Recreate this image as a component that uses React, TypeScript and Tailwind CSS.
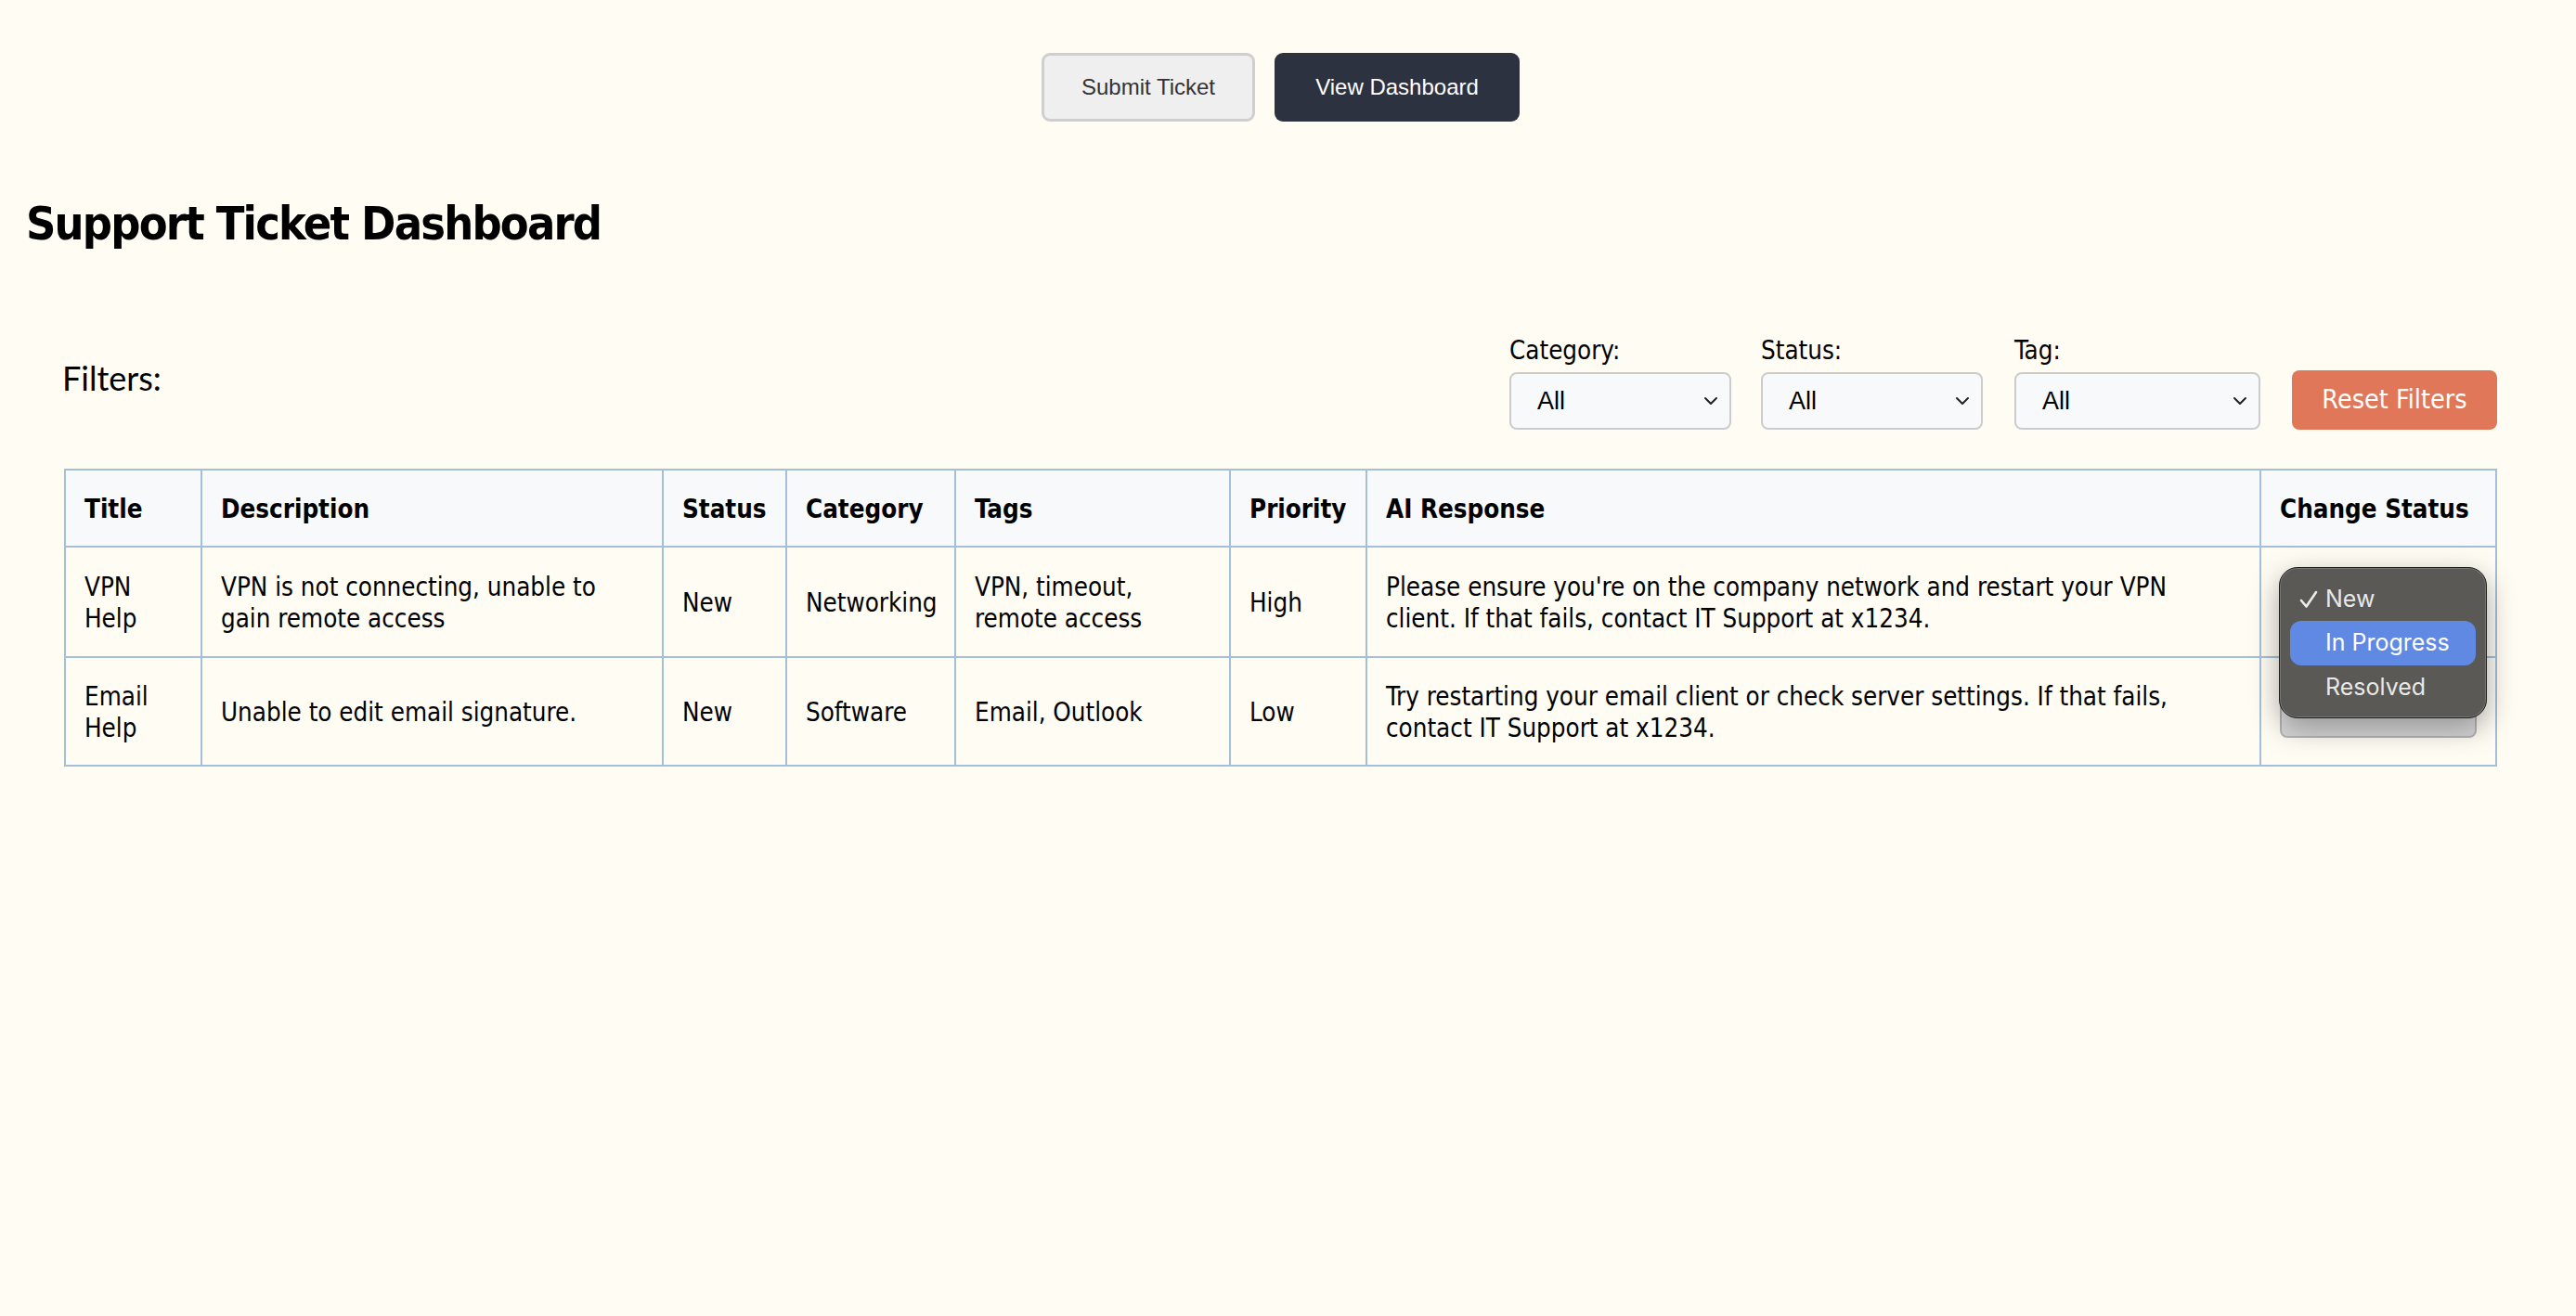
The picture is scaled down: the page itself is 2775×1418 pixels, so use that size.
import React from "react";

const tahoma = { fontFamily: '"DejaVu Sans Condensed", "DejaVu Sans", sans-serif' };

function Chevron() {
  return (
    <svg width="16" height="10" viewBox="0 0 16 10" className="shrink-0">
      <polyline points="2,2 8,8 14,2" fill="none" stroke="#222" strokeWidth="2" strokeLinecap="round" strokeLinejoin="round" />
    </svg>
  );
}

function FilterSelect({ label, width }: { label: string; width: string }) {
  return (
    <div className="flex flex-col gap-[8px]">
      <span className="text-[27.5px] leading-[32px] text-black" style={tahoma}>{label}</span>
      <div className={`${width} h-[62px] flex items-center justify-between pl-[28px] pr-[12px] bg-[#f8f9fa] border-2 border-[#cccccc] rounded-[8px]`}>
        <span className="text-[27px] text-black" style={{ fontFamily: '"Liberation Sans", Arial, sans-serif' }}>All</span>
        <Chevron />
      </div>
    </div>
  );
}

const th = "border-2 border-[#a3c0d8] bg-[#f8f9fa] px-[20px] text-left align-middle font-bold text-[27.5px] leading-[34px] text-black whitespace-nowrap";
const td = "border-2 border-[#a3c0d8] px-[20px] text-left align-middle text-[27.5px] leading-[34px] text-black whitespace-nowrap";

export default function App() {
  return (
    <div className="min-h-[1418px] w-full bg-[#fffcf4] text-black" style={tahoma}>
      <div className="flex justify-center gap-[21px] pt-[57px] pr-[16px]">
        <button className="w-[230px] h-[74px] bg-[#efeff0] border-[3px] border-[#cfcfcf] rounded-[9px] text-[24px] text-[#333]" style={{ fontFamily: '"Liberation Sans", Arial, sans-serif' }}>
          Submit Ticket
        </button>
        <button className="w-[264px] h-[74px] bg-[#2c3240] rounded-[9px] text-[24px] text-white" style={{ fontFamily: '"Liberation Sans", Arial, sans-serif' }}>
          View Dashboard
        </button>
      </div>

      <h1 className="mt-[77px] ml-[28px] text-[50px] leading-[67px] font-bold tracking-[-1.8px]">Support Ticket Dashboard</h1>

      <div className="ml-[67px] mr-[85px] mt-[86px]">
        <div className="flex items-start justify-between">
          <div className="pt-[26px] text-[36px] leading-[40px]" style={{ fontFamily: 'Lato, "Liberation Sans", sans-serif' }}>Filters:</div>
          <div className="flex items-end">
            <FilterSelect label="Category:" width="w-[239px]" />
            <div className="ml-[32px]">
              <FilterSelect label="Status:" width="w-[239px]" />
            </div>
            <div className="ml-[34px]">
              <FilterSelect label="Tag:" width="w-[265px]" />
            </div>
            <button className="ml-[34px] w-[221px] h-[64px] bg-[#df7758] rounded-[8px] text-white text-[28.5px]" style={tahoma}>Reset Filters</button>
          </div>
        </div>

        <div className="relative mt-[42px] ml-[2px]">
          <table className="table-fixed border-collapse w-[2619px] border-2 border-[#a3c0d8]">
            <colgroup>
              <col className="w-[147px]" />
              <col className="w-[497px]" />
              <col className="w-[133px]" />
              <col className="w-[182px]" />
              <col className="w-[296px]" />
              <col className="w-[147px]" />
              <col className="w-[963px]" />
              <col className="w-[254px]" />
            </colgroup>
            <thead>
              <tr className="h-[83px]">
                <th className={th}>Title</th>
                <th className={th}>Description</th>
                <th className={th}>Status</th>
                <th className={th}>Category</th>
                <th className={th}>Tags</th>
                <th className={th}>Priority</th>
                <th className={th}>AI Response</th>
                <th className={th}>Change Status</th>
              </tr>
            </thead>
            <tbody>
              <tr className="h-[119px]">
                <td className={td}>VPN<br />Help</td>
                <td className={td}>VPN is not connecting, unable to<br />gain remote access</td>
                <td className={td}>New</td>
                <td className={td}>Networking</td>
                <td className={td}>VPN, timeout,<br />remote access</td>
                <td className={td}>High</td>
                <td className={td}>Please ensure you're on the company network and restart your VPN<br />client. If that fails, contact IT Support at x1234.</td>
                <td className={td}>
                  <div className="h-[56px] rounded-[8px] border-2 border-[#b5b5b5] bg-gradient-to-b from-[#f2f2f2] to-[#d6d6d6]" />
                </td>
              </tr>
              <tr className="h-[117px]">
                <td className={td}>Email<br />Help</td>
                <td className={td}>Unable to edit email signature.</td>
                <td className={td}>New</td>
                <td className={td}>Software</td>
                <td className={td}>Email, Outlook</td>
                <td className={td}>Low</td>
                <td className={td}>Try restarting your email client or check server settings. If that fails,<br />contact IT Support at x1234.</td>
                <td className={td}>
                  <div className="h-[56px] rounded-[8px] border-2 border-[#b5b5b5] bg-gradient-to-b from-[#f2f2f2] to-[#d6d6d6]" />
                </td>
              </tr>
            </tbody>
          </table>

          <div
            className="absolute right-[11px] top-[106px] w-[224px] h-[163px] rounded-[20px] bg-[#5a5955] border border-[#1e1e1e] shadow-[0_10px_30px_rgba(0,0,0,0.35),inset_0_0_0_1px_rgba(255,255,255,0.18)] px-[11px] pt-[11px]"
            style={{ fontFamily: 'Inter, "Noto Sans", sans-serif' }}
          >
            <div className="relative flex items-center h-[46px] text-[25px] text-[#e8e8e6]">
              <svg width="20" height="20" viewBox="0 0 20 20" className="ml-[10px] mr-[8px]">
                <polyline points="2,11 7.5,17.5 18,2" fill="none" stroke="#ececea" strokeWidth="2.6" strokeLinecap="round" strokeLinejoin="round" />
              </svg>
              <span>New</span>
            </div>
            <div className="relative flex items-center h-[48px] rounded-[12px] bg-[#5f89e3] pl-[38px] text-[25px] text-white">In Progress</div>
            <div className="relative flex items-center h-[48px] pl-[38px] text-[25px] text-[#e8e8e6]">Resolved</div>
          </div>
        </div>
      </div>
    </div>
  );
}
